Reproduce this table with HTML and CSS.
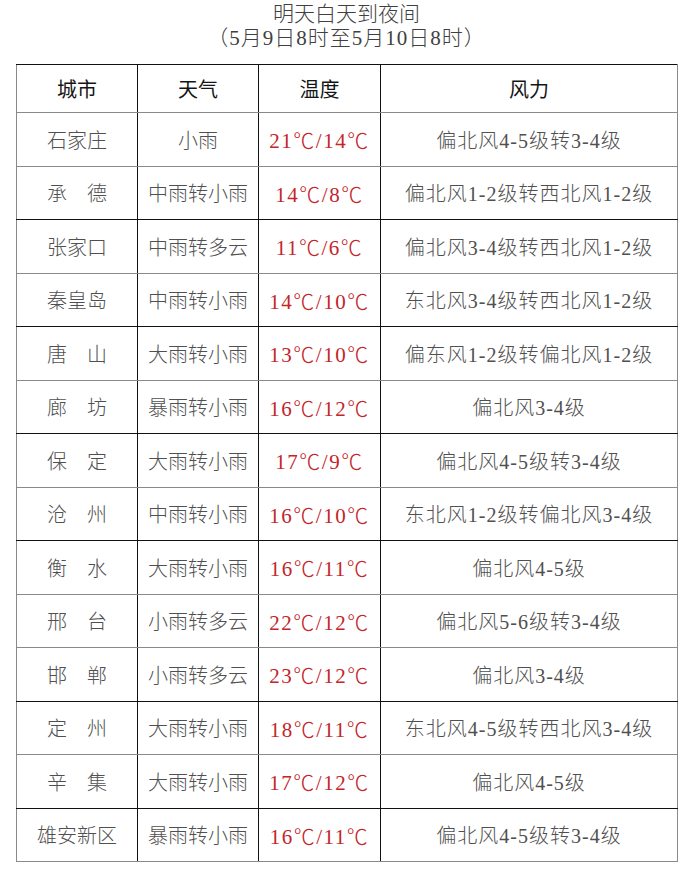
FILE: index.html
```html
<!DOCTYPE html>
<html lang="zh">
<head>
<meta charset="utf-8">
<link rel="stylesheet" href="styles.css">
</head>
<body>
<div class="page">
  <div class="title">
    <div class="t1">明天白天到夜间</div>
    <div class="t2">（5月9日8时至5月10日8时）</div>
  </div>
  <table class="wx">
    <colgroup><col class="c1"><col class="c2"><col class="c3"><col class="c4"></colgroup>
    <thead>
      <tr class="g"><th>城市</th><th>天气</th><th>温度</th><th>风力</th></tr>
    </thead>
    <tbody>
      <tr class="g"><td>石家庄</td><td>小雨</td><td class="t">21<span class="deg">℃</span>/14<span class="deg">℃</span></td><td class="w">偏北风4-5级转3-4级</td></tr>
      <tr class="b"><td>承　德</td><td>中雨转小雨</td><td class="t">14<span class="deg">℃</span>/8<span class="deg">℃</span></td><td class="w">偏北风1-2级转西北风1-2级</td></tr>
      <tr class="g"><td>张家口</td><td>中雨转多云</td><td class="t">11<span class="deg">℃</span>/6<span class="deg">℃</span></td><td class="w">偏北风3-4级转西北风1-2级</td></tr>
      <tr class="b"><td>秦皇岛</td><td>中雨转小雨</td><td class="t">14<span class="deg">℃</span>/10<span class="deg">℃</span></td><td class="w">东北风3-4级转西北风1-2级</td></tr>
      <tr class="g"><td>唐　山</td><td>大雨转小雨</td><td class="t">13<span class="deg">℃</span>/10<span class="deg">℃</span></td><td class="w">偏东风1-2级转偏北风1-2级</td></tr>
      <tr class="b"><td>廊　坊</td><td>暴雨转小雨</td><td class="t">16<span class="deg">℃</span>/12<span class="deg">℃</span></td><td class="w">偏北风3-4级</td></tr>
      <tr class="g"><td>保　定</td><td>大雨转小雨</td><td class="t">17<span class="deg">℃</span>/9<span class="deg">℃</span></td><td class="w">偏北风4-5级转3-4级</td></tr>
      <tr class="b"><td>沧　州</td><td>中雨转小雨</td><td class="t">16<span class="deg">℃</span>/10<span class="deg">℃</span></td><td class="w">东北风1-2级转偏北风3-4级</td></tr>
      <tr class="g"><td>衡　水</td><td>大雨转小雨</td><td class="t">16<span class="deg">℃</span>/11<span class="deg">℃</span></td><td class="w">偏北风4-5级</td></tr>
      <tr class="g"><td>邢　台</td><td>小雨转多云</td><td class="t">22<span class="deg">℃</span>/12<span class="deg">℃</span></td><td class="w">偏北风5-6级转3-4级</td></tr>
      <tr class="b"><td>邯　郸</td><td>小雨转多云</td><td class="t">23<span class="deg">℃</span>/12<span class="deg">℃</span></td><td class="w">偏北风3-4级</td></tr>
      <tr class="g"><td>定　州</td><td>大雨转小雨</td><td class="t">18<span class="deg">℃</span>/11<span class="deg">℃</span></td><td class="w">东北风4-5级转西北风3-4级</td></tr>
      <tr class="b"><td>辛　集</td><td>大雨转小雨</td><td class="t">17<span class="deg">℃</span>/12<span class="deg">℃</span></td><td class="w">偏北风4-5级</td></tr>
      <tr class="g"><td>雄安新区</td><td>暴雨转小雨</td><td class="t">16<span class="deg">℃</span>/11<span class="deg">℃</span></td><td class="w">偏北风4-5级转3-4级</td></tr>
    </tbody>
  </table>
</div>
</body>
</html>
```
FILE: styles.css
```css
html, body {
  margin: 0;
  padding: 0;
  background: #ffffff;
}
.page {
  width: 690px;
  height: 892px;
  padding: 2px 0 0 16px;
  box-sizing: border-box;
  font-family: "Liberation Serif", "Noto Sans CJK SC", serif;
}
.title {
  width: 661px;
  text-align: center;
  color: #404040;
  font-size: 21px;
  line-height: 24px;
  font-weight: 300;
}
.title .t2 {
  letter-spacing: 1px;
}
.wx {
  margin-top: 14px;
  width: 661px;
  border-collapse: collapse;
  table-layout: fixed;
}
.c1 { width: 121px; }
.c2 { width: 121px; }
.c3 { width: 122px; }
.c4 { width: 297px; }
.wx th, .wx td {
  text-align: center;
  vertical-align: middle;
  font-size: 20px;
  padding: 0;
  border-left: 1px solid #111;
  border-right: 1px solid #111;
  white-space: nowrap;
}
.wx th {
  height: 47px;
  color: #151515;
  font-weight: 400;
  border-top: 1.5px solid #111;
}
.wx td {
  height: 52.5px;
  color: #505050;
  font-weight: 300;
}
.wx th:first-child, .wx td:first-child {
  border-left-color: #8a8a8a;
}
.wx th:last-child, .wx td:last-child {
  border-right-color: #8a8a8a;
}
.wx tr.g th, .wx tr.g td {
  border-bottom: 1px solid #8a8a8a;
}
.wx tr.b td {
  border-bottom: 1.5px solid #111;
}
.wx td.w {
  letter-spacing: 1px;
}
.wx td.t {
  color: #c4252a;
  font-weight: 400;
  font-size: 21px;
  letter-spacing: 1.5px;
}
.wx td.t .deg {
  font-family: "Noto Sans CJK SC", sans-serif;
  font-weight: 300;
}
```
